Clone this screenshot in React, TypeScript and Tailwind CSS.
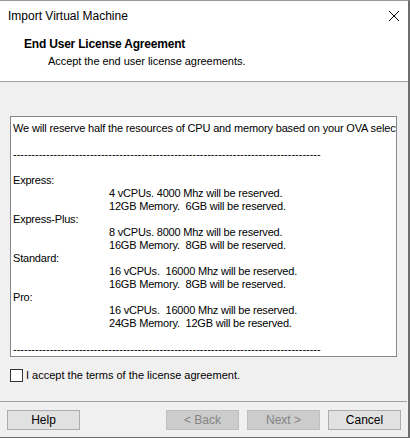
const DASHES = "-".repeat(84);

const TIERS = [
  { name: "Express:", cpu: "4 vCPUs. 4000 Mhz will be reserved.", mem: "12GB Memory.  6GB will be reserved." },
  { name: "Express-Plus:", cpu: "8 vCPUs. 8000 Mhz will be reserved.", mem: "16GB Memory.  8GB will be reserved." },
  { name: "Standard:", cpu: "16 vCPUs.  16000 Mhz will be reserved.", mem: "16GB Memory.  8GB will be reserved." },
  { name: "Pro:", cpu: "16 vCPUs.  16000 Mhz will be reserved.", mem: "24GB Memory.  12GB will be reserved." },
];

function DialogButton({ label, disabled }: { label: string; disabled?: boolean }) {
  return (
    <button
      disabled={disabled}
      className={
        disabled
          ? "w-[73px] h-[20px] border border-[#bfbfbf] bg-[#cccccc] text-[#838383] text-[12px] leading-none"
          : "w-[73px] h-[20px] border border-[#adadad] bg-[#e1e1e1] text-black text-[12px] leading-none"
      }
    >
      {label}
    </button>
  );
}

export default function App() {
  return (
    <div className="w-[410px] h-[438px] flex flex-col bg-[#f0f0f0] border-t border-t-[#9a9a9a] border-r-2 border-b border-r-[#6e6e6e] border-b-[#6e6e6e] font-['Liberation_Sans',Arial,sans-serif] text-black overflow-hidden">
      {/* header */}
      <div className="h-[81px] shrink-0 bg-white border-b border-[#a0a0a0]">
        <div className="h-[30px] flex items-center justify-between pl-[8px] pr-[8px]">
          <span className="text-[12px]">Import Virtual Machine</span>
          <svg width="12" height="12" viewBox="0 0 12 12" className="text-black">
            <path d="M1 1 L11 11 M11 1 L1 11" stroke="currentColor" strokeWidth="1" fill="none" />
          </svg>
        </div>
        <div className="pt-[5px] pl-[24px]">
          <p className="text-[12px] font-bold leading-[16px] tracking-[-0.2px]">End User License Agreement</p>
          <p className="mt-[1px] pl-[24px] text-[11px] leading-[16px] tracking-[-0.05px]">Accept the end user license agreements.</p>
        </div>
      </div>

      {/* license text */}
      <div className="mt-[34px] ml-[10px] w-[387px] h-[241px] shrink-0 border border-[#828790] bg-white overflow-hidden pl-[2px] pt-[5px] text-[11px] leading-[13px] whitespace-pre">
        <div className="tracking-[-0.15px]">We will reserve half the resources of CPU and memory based on your OVA selection.</div>
        <div>&nbsp;</div>
        <div>{DASHES}</div>
        <div>&nbsp;</div>
        {TIERS.map((t) => (
          <div key={t.name} className="tracking-[-0.2px]">
            <div>{t.name}</div>
            <div className="pl-[96px]">{t.cpu}</div>
            <div className="pl-[96px]">{t.mem}</div>
          </div>
        ))}
        <div>&nbsp;</div>
        <div>{DASHES}</div>
      </div>

      {/* accept */}
      <label className="mt-[12px] ml-[10px] h-[13px] flex items-center gap-[3px]">
        <span className="w-[13px] h-[13px] border border-[#333333] bg-white shrink-0" />
        <span className="text-[11px] leading-[13px]">I accept the terms of the license agreement.</span>
      </label>

      <div className="mt-[19px] mr-[1px] h-px bg-[#a0a0a0]" />

      {/* buttons */}
      <div className="mt-[8px] flex items-center px-[7px]">
        <DialogButton label="Help" />
        <div className="flex-1" />
        <div className="flex gap-[8px]">
          <DialogButton label="< Back" disabled />
          <DialogButton label="Next >" disabled />
          <DialogButton label="Cancel" />
        </div>
      </div>
    </div>
  );
}
